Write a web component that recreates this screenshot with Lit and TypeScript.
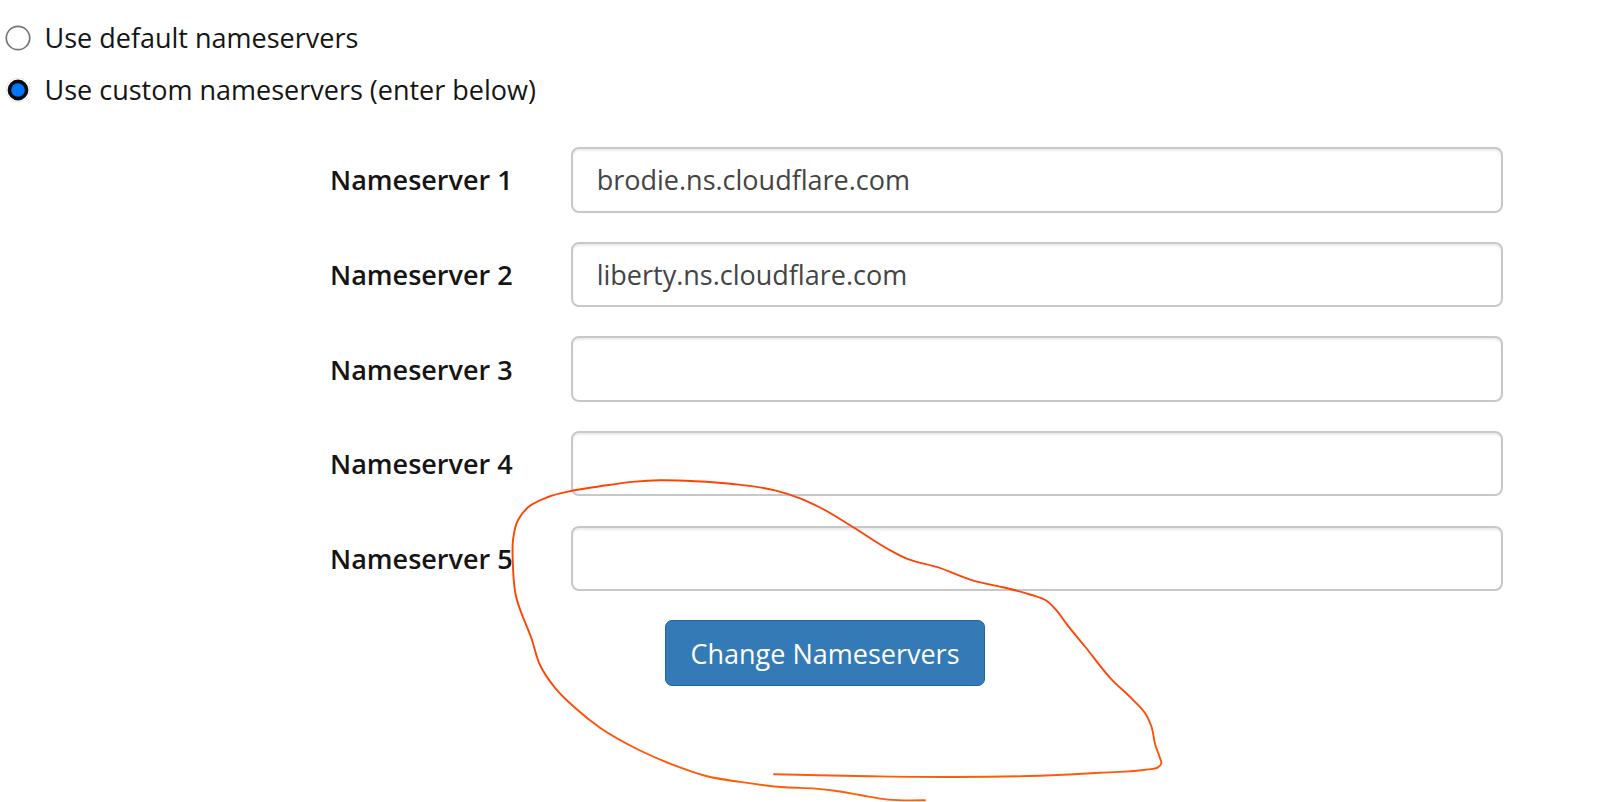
import { css, html, svg, LitElement } from 'lit';
import { customElement, property } from 'lit/decorators.js';

type Point = [number, number];

// Points the pen goes through, from the inner end to the outer one.
const STROKE: Point[] = [
    [774, 774.3], [870, 776.2], [955, 777], [1040, 775.7],
    [1100, 772.8], [1148, 769.4], [1157.5, 767.6], [1161.3, 763.5], [1159.8, 757.5],
    [1155.3, 745], [1151.6, 727], [1146, 714.5], [1133, 699.8],
    [1111, 678.8], [1085, 646.5], [1066.7, 624.2], [1056.7, 610.7],
    [1047.5, 601.4], [1030, 594.5], [1001.7, 587], [975, 581.1],
    [936.7, 566.9], [908, 559.2], [887, 548.5], [853.3, 527.3], [820, 507.5],
    [800, 498.3], [776, 490.6], [733, 484], [695, 481.2], [660, 480.3],
    [635, 481.6], [600, 486.3], [572, 490.8], [548, 497], [529, 506.5],
    [518, 520], [513, 540], [512.8, 562], [515.5, 594],
    [532, 640], [540, 665], [555, 687.8], [575, 707.8],
    [600, 727.8], [640, 750.5], [672, 764.4], [706, 776], [740, 781.9], [785, 787.3],
    [815, 788.6], [835, 790.7], [860, 795], [888, 799.6], [925, 800.3],
];

function tangent(a: Point, b: Point, c: Point): Point {
    const l1 = Math.hypot(b[0] - a[0], b[1] - a[1]) || 1;
    const l2 = Math.hypot(c[0] - b[0], c[1] - b[1]) || 1;
    // the shorter neighbour has the larger say in the direction
    const w1 = l2 / (l1 + l2) / l1;
    const w2 = l1 / (l1 + l2) / l2;
    return [
        (b[0] - a[0]) * w1 + (c[0] - b[0]) * w2,
        (b[1] - a[1]) * w1 + (c[1] - b[1]) * w2,
    ];
}

function smoothPath(points: Point[]) {
    let d = `M ${points[0].join(',')}`;
    for (let i = 0; i < points.length - 1; i++) {
        const b = points[i];
        const c = points[i + 1];
        const t1 = tangent(points[i - 1] || b, b, c);
        const t2 = tangent(b, c, points[i + 2] || c);
        const len = Math.hypot(c[0] - b[0], c[1] - b[1]) / 3;
        d += ` C ${b[0] + t1[0] * len},${b[1] + t1[1] * len}`
            + ` ${c[0] - t2[0] * len},${c[1] - t2[1] * len}`
            + ` ${c[0]},${c[1]}`;
    }
    return d;
}

@customElement('nameserver-option')
class NameserverOption extends LitElement {
    @property({ type: Boolean }) checked = false;

    static get styles() {
        return css`
          :host {
            display: flex;
            align-items: center;
            gap: 14px;
            height: 52px;
            color: #151515;
            font-size: 27px;
            line-height: 36px;
            white-space: nowrap;
          }

          svg {
            flex: none;
            width: 26px;
            height: 26px;
          }
        `;
    }

    render() {
        return html`
            <svg viewBox="0 0 26 26">
                ${this.checked
                    ? svg`<circle cx="13" cy="13" r="12" fill="#fff" stroke="#dcebfc" />
                        <circle cx="13" cy="13" r="8.6" fill="#0075ff" stroke="#0b0b0b" stroke-width="3.6" />`
                    : svg`<circle cx="13" cy="13" r="11.7" fill="#fff" stroke="#767676" stroke-width="1.7" />`}
            </svg>
            <slot></slot>
        `;
    }
}

@customElement('nameserver-field')
class NameserverField extends LitElement {
    @property() label = '';
    @property() value = '';

    static get styles() {
        return css`
          :host {
            display: grid;
            grid-template-columns: 513px 932px;
            column-gap: 58px;
            align-items: center;
            height: 65.4px;
          }

          label {
            padding-left: 330px;
            color: #151515;
            font-size: 27px;
            font-weight: 600;
            white-space: nowrap;
          }

          input {
            box-sizing: border-box;
            width: 100%;
            height: 65.4px;
            padding: 0 23.7px;
            border: 2px solid #c8c8c8;
            border-radius: 8px;
            box-shadow: inset 0 2px 2px rgba(0, 0, 0, 0.075);
            background: #fff;
            color: #444;
            font-family: inherit;
            font-size: 27px;
            outline: none;
          }
        `;
    }

    render() {
        return html`
            <label for="ns">${this.label}</label>
            <input id="ns" type="text" .value=${this.value}>
        `;
    }
}

@customElement('app-root')
class AppRoot extends LitElement {
    static get styles() {
        return css`
          :host {
            display: block;
            position: relative;
            box-sizing: border-box;
            height: 802px;
            overflow: hidden;
            background: #fff;
            font-family: "Open Sans", "Noto Sans", sans-serif;
          }

          .options {
            padding: 12px 0 0 4.5px;
          }

          .fields {
            display: flex;
            flex-direction: column;
            gap: 29.2px;
            padding-top: 31.2px;
          }

          .actions {
            padding: 29px 0 0 665px;
          }

          button {
            box-sizing: border-box;
            width: 320px;
            height: 66px;
            padding: 1px 0 0;
            border: 1.5px solid #1f67a3;
            border-radius: 7px;
            background: #337ab7;
            color: #fff;
            font-family: inherit;
            font-size: 27px;
            white-space: nowrap;
          }

          .pen {
            position: absolute;
            top: 0;
            left: 0;
            width: 1600px;
            height: 802px;
            pointer-events: none;
          }
        `;
    }

    render() {
        const values = ['brodie.ns.cloudflare.com', 'liberty.ns.cloudflare.com', '', '', ''];
        return html`
            <div class="options">
                <nameserver-option>Use default nameservers</nameserver-option>
                <nameserver-option checked>Use custom nameservers (enter below)</nameserver-option>
            </div>

            <div class="fields">
                ${values.map((value, i) => html`
                    <nameserver-field label="Nameserver ${i + 1}" .value=${value}></nameserver-field>
                `)}
            </div>

            <div class="actions">
                <button type="button">Change Nameservers</button>
            </div>

            <svg class="pen" viewBox="0 0 1600 802">
                <defs>
                    <linearGradient id="ink" gradientUnits="userSpaceOnUse" x1="0" y1="480" x2="0" y2="800">
                        <stop offset="0" stop-color="#ff4306" />
                        <stop offset="0.6" stop-color="#ff4606" />
                        <stop offset="1" stop-color="#ff5f05" />
                    </linearGradient>
                </defs>
                <path d=${smoothPath(STROKE)} fill="none" stroke="url(#ink)" stroke-width="1.9"
                    stroke-linecap="round" stroke-linejoin="round" />
            </svg>
        `;
    }
}
